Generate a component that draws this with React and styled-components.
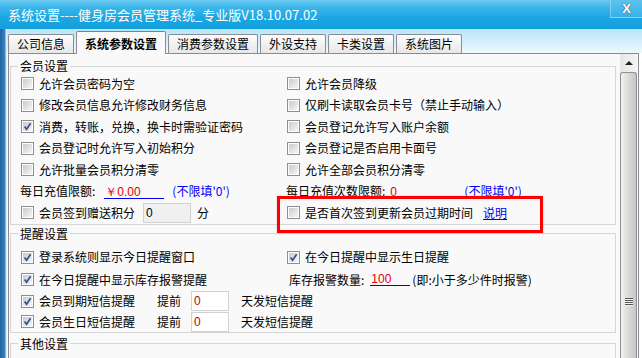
import React from 'react'
import styled, { createGlobalStyle } from 'styled-components'

const GlobalStyle = createGlobalStyle`
  body {
    margin: 0;
    background: #fff;
    overflow: hidden;
    font-family: "Noto Sans CJK SC", "Noto Sans", sans-serif;
  }
`

const Window = styled.div`
  width: 642px;
  height: 358px;
  display: flex;
  flex-direction: column;
  overflow: hidden;
  font-size: 12px;
  line-height: 14px;
  color: #000;
`

const TitleBar = styled.div`
  height: 29px;
  flex-shrink: 0;
  display: flex;
  align-items: flex-start;
  background: linear-gradient(#6ccaf1 0%, #3bb6ea 25%, #1ca7e3 60%, #139fdd 100%);
`

const TitleText = styled.div`
  padding: 7px 0 0 8px;
  font-size: 13px;
  line-height: 16px;
  color: #fff;
  white-space: nowrap;
`

const CloseButton = styled.div`
  margin-left: auto;
  width: 31px;
  height: 17px;
  display: flex;
  align-items: center;
  justify-content: center;
  border-left: 1px solid rgba(255, 255, 255, 0.3);
  border-bottom: 1px solid rgba(255, 255, 255, 0.25);
  background: linear-gradient(#5cc3ee, #35b2e8);
  color: #fff;
  font-family: "Liberation Sans", sans-serif;
  font-weight: bold;
  font-size: 13px;
  text-shadow: 0 0 1px #555, 0 0 1px #555;
`

const Body = styled.div`
  flex: 1;
  display: flex;
  min-height: 0;
`

const LeftEdge = styled.div`
  width: 7px;
  flex-shrink: 0;
  background: linear-gradient(90deg, #1d64a2 0%, #3a83c2 70%, #cfe6f4 86%, #f2f2f2 100%);
`

const Main = styled.div`
  flex: 1;
  min-width: 0;
  display: flex;
  flex-direction: column;
`

const TabStrip = styled.div`
  height: 24px;
  flex-shrink: 0;
  display: flex;
  align-items: flex-end;
  gap: 2px;
  padding-left: 1px;
  background: linear-gradient(#b6e5f7, #eef9fd);
`

const Tab = styled.div`
  box-sizing: border-box;
  height: ${p => (p.$active ? 23 : 19)}px;
  margin-bottom: ${p => (p.$active ? -1 : 0)}px;
  padding: ${p => (p.$active ? '1px 8px 0' : '0 8px')};
  display: flex;
  align-items: center;
  border: 1px solid #898c95;
  border-bottom: none;
  border-top-color: ${p => (p.$active ? '#5a86b3' : '#898c95')};
  border-radius: 2px 2px 0 0;
  background: ${p => (p.$active ? '#f9f9f9' : 'linear-gradient(#fcfcfc, #e7e7e7)')};
  font-weight: ${p => (p.$active ? 'bold' : 'normal')};
  position: relative;
  z-index: ${p => (p.$active ? 1 : 0)};
  white-space: nowrap;
`

const Panel = styled.div`
  flex: 1;
  min-height: 0;
  display: flex;
  margin: 0 3px 0 1px;
  border: 1px solid #898c95;
  border-bottom: none;
  background: #f9f9f9;
`

const Content = styled.div`
  flex: 1;
  min-width: 0;
  position: relative;
  padding: 5px 4px 0 1px;
  overflow: hidden;
  display: flex;
  flex-direction: column;
`

const Group = styled.fieldset`
  margin: ${p => p.$mt || 0}px 0 0;
  padding: 0;
  min-width: 0;
  border: 1px solid #d6d6d6;
  flex-shrink: 0;
`

const Legend = styled.legend`
  margin-left: 7px;
  padding: 0 2px;
  font-size: 12px;
  line-height: 14px;
`

const GroupBody = styled.div`
  display: grid;
  grid-template-columns: 266px 1fr;
  grid-template-rows: ${p => p.$rows};
  padding: ${p => p.$pt || 0}px 0 0 10px;
`

const Cell = styled.div`
  display: flex;
  align-items: center;
  white-space: nowrap;
  grid-column: ${p => (p.$span ? '1 / -1' : 'auto')};
  margin-left: ${p => p.$indent || 0}px;
`

const Box = styled.span`
  box-sizing: border-box;
  width: 13px;
  height: 13px;
  flex-shrink: 0;
  padding: 1px;
  border: 1px solid #8e8f8f;
  background: linear-gradient(135deg, #c8cbd0, #f6f6f6) content-box, #fdfdfd;
  display: flex;
  align-items: center;
  justify-content: center;
`

const Text = styled.span`
  margin-left: ${p => p.$ml || 0}px;
  color: ${p => p.$color || '#000'};
`

const FixedLabel = styled.span`
  display: inline-block;
  width: ${p => p.$w}px;
`

const UnderField = styled.span`
  box-sizing: border-box;
  display: inline-block;
  width: ${p => p.$w}px;
  margin-left: ${p => p.$ml || 0}px;
  padding-left: 1px;
  line-height: 12px;
  border-bottom: 1px solid #0000f0;
  color: #e00000;
  font-family: "Liberation Sans", sans-serif;
  font-size: 12px;
  align-self: flex-end;
  margin-bottom: ${p => p.$mb || 3}px;
`

const BoxField = styled.span`
  box-sizing: border-box;
  display: inline-flex;
  align-items: center;
  width: ${p => p.$w}px;
  height: 20px;
  margin-left: ${p => p.$ml || 0}px;
  padding-left: 2px;
  border: 1px solid #d2d2d2;
  background: ${p => p.$bg || '#fff'};
  color: ${p => p.$color || '#000'};
  font-family: "Liberation Sans", sans-serif;
`

const Link = styled.span`
  margin-left: 10px;
  color: #0000ee;
  text-decoration: underline;
`

const Highlight = styled.div`
  position: absolute;
  left: 268px;
  top: 142px;
  width: 266px;
  height: 37px;
  box-sizing: border-box;
  border: 3px solid #ff0000;
  box-shadow: 0 0 1px #ff8080;
  pointer-events: none;
`

const Scrollbar = styled.div`
  width: 17px;
  flex-shrink: 0;
  margin-right: 1px;
  display: flex;
  flex-direction: column;
  background: linear-gradient(90deg, #e6e6e6, #f3f3f3);
`

const UpButton = styled.div`
  height: 17px;
  flex-shrink: 0;
  display: flex;
  align-items: center;
  justify-content: center;
  &::before {
    content: '';
    border-left: 4px solid transparent;
    border-right: 4px solid transparent;
    border-bottom: 4px solid #222;
  }
`

const Thumb = styled.div`
  flex: 1;
  margin-top: 1px;
  padding-top: 225px;
  border: 1px solid #8f8f8f;
  border-bottom: none;
  border-radius: 3px 3px 0 0;
  background: linear-gradient(90deg, #f2f2f2 0%, #dedede 40%, #c6c6c6 100%);
  display: flex;
  flex-direction: column;
  align-items: center;
  gap: 1px;
`

const GripLine = styled.span`
  width: 8px;
  height: 1px;
  background: #555;
  box-shadow: 0 1px 0 #f4f4f4;
`

const tabs = ['公司信息', '系统参数设置', '消费参数设置', '外设支持', '卡类设置', '系统图片']

const Check = ({ checked, children }) => (
  <>
    <Box>
      {checked && (
        <svg width="9" height="9" viewBox="0 0 9 9">
          <path d="M1.6 4.4 L3.6 7.2 L7.6 1.2" fill="none" stroke="#3a4f8c" strokeWidth="1.7" />
        </svg>
      )}
    </Box>
    <Text $ml={5}>{children}</Text>
  </>
)

const CheckCell = ({ checked, children }) => (
  <Cell>
    <Check checked={checked}>{children}</Check>
  </Cell>
)

const SmsRow = ({ label }) => (
  <Cell $span>
    <Check checked><FixedLabel $w={118}>{label}</FixedLabel></Check>
    <Text>提前</Text>
    <BoxField $w={38} $ml={10} $color="#c00000">0</BoxField>
    <Text $ml={12}>天发短信提醒</Text>
  </Cell>
)

export default function App() {
  return (
    <>
      <GlobalStyle />
      <Window>
        <TitleBar>
          <TitleText>系统设置----健身房会员管理系统_专业版V18.10.07.02</TitleText>
          <CloseButton>X</CloseButton>
        </TitleBar>
        <Body>
          <LeftEdge />
          <Main>
            <TabStrip>
              {tabs.map(t => (
                <Tab key={t} $active={t === '系统参数设置'}>{t}</Tab>
              ))}
            </TabStrip>
            <Panel>
              <Content>
                <Group>
                  <Legend>会员设置</Legend>
                  <GroupBody $rows="repeat(7, 21.5px)">
                    <CheckCell>允许会员密码为空</CheckCell>
                    <CheckCell>允许会员降级</CheckCell>
                    <CheckCell>修改会员信息允许修改财务信息</CheckCell>
                    <CheckCell>仅刷卡读取会员卡号（禁止手动输入）</CheckCell>
                    <CheckCell checked>消费，转账，兑换，换卡时需验证密码</CheckCell>
                    <CheckCell>会员登记允许写入账户余额</CheckCell>
                    <CheckCell>会员登记时允许写入初始积分</CheckCell>
                    <CheckCell>会员登记是否启用卡面号</CheckCell>
                    <CheckCell>允许批量会员积分清零</CheckCell>
                    <CheckCell>允许全部会员积分清零</CheckCell>
                    <Cell $indent={-1}>
                      <Text>每日充值限额:</Text>
                      <UnderField $w={60} $ml={9}>￥0.00</UnderField>
                      <Text $ml={8} $color="#0000ff">(不限填'0')</Text>
                    </Cell>
                    <Cell $indent={-1}>
                      <Text>每日充值次数限额:</Text>
                      <UnderField $w={62} $ml={4}>0</UnderField>
                      <Text $ml={13} $color="#0000ff">(不限填'0')</Text>
                    </Cell>
                    <Cell>
                      <Check>会员签到赠送积分</Check>
                      <BoxField $w={48} $ml={8} $bg="#f0f0f0">0</BoxField>
                      <Text $ml={6}>分</Text>
                    </Cell>
                    <Cell>
                      <Check>是否首次签到更新会员过期时间</Check>
                      <Link>说明</Link>
                    </Cell>
                  </GroupBody>
                </Group>

                <Group $mt={2}>
                  <Legend>提醒设置</Legend>
                  <GroupBody $rows="23px 22px 21px 20px" $pt={5}>
                    <CheckCell checked>登录系统则显示今日提醒窗口</CheckCell>
                    <CheckCell checked>在今日提醒中显示生日提醒</CheckCell>
                    <CheckCell checked>在今日提醒中显示库存报警提醒</CheckCell>
                    <Cell $indent={2}>
                      <Text>库存报警数量:</Text>
                      <UnderField $w={40} $ml={6} $mb={5}>100</UnderField>
                      <Text $ml={2}>(即:小于多少件时报警)</Text>
                    </Cell>
                    <SmsRow label="会员到期短信提醒" />
                    <SmsRow label="会员生日短信提醒" />
                  </GroupBody>
                </Group>

                <Group $mt={4}>
                  <Legend>其他设置</Legend>
                  <GroupBody $rows="21px" $pt={6}>
                    <CheckCell>允许会员卡余额为负数</CheckCell>
                  </GroupBody>
                </Group>

                <Highlight />
              </Content>
              <Scrollbar>
                <UpButton />
                <Thumb>
                  <GripLine />
                  <GripLine />
                  <GripLine />
                  <GripLine />
                </Thumb>
              </Scrollbar>
            </Panel>
          </Main>
        </Body>
      </Window>
    </>
  )
}
